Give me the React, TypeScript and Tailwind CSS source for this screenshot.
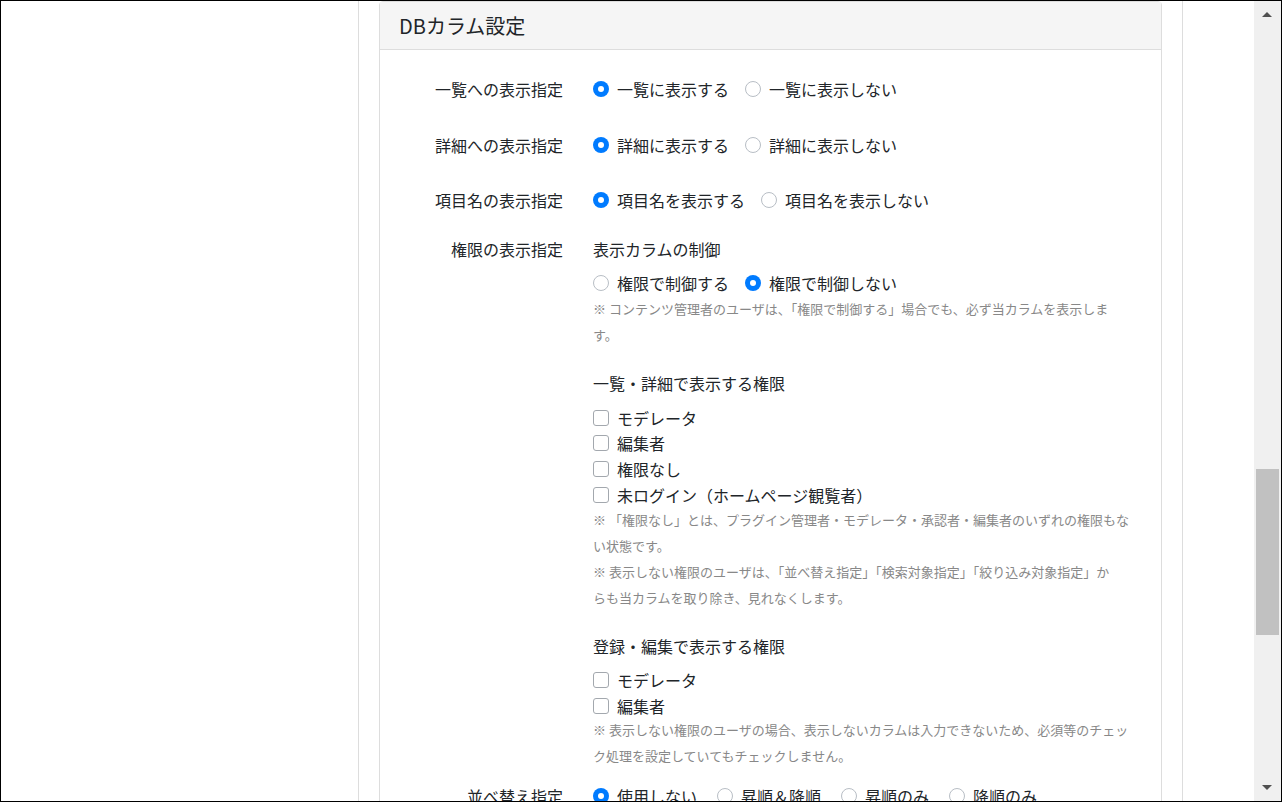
import type { ReactNode } from 'react';

const font = "font-['Noto_Sans_CJK_JP','Noto_Sans',sans-serif]";

function Radio({ label, checked = false, wide = false }: { label: string; checked?: boolean; wide?: boolean }) {
  return (
    <label className={`flex items-center ${wide ? 'mr-5' : 'mr-4'}`}>
      {checked ? (
        <span className="w-4 h-4 rounded-full bg-[#007bff] flex items-center justify-center shrink-0">
          <span className="w-1.5 h-1.5 rounded-full bg-white" />
        </span>
      ) : (
        <span className="w-4 h-4 rounded-full border border-[#b8bec5] bg-white shrink-0" />
      )}
      <span className="ml-2">{label}</span>
    </label>
  );
}

function Check({ label }: { label: string }) {
  return (
    <label className="flex items-center h-[25.67px]">
      <span className="w-4 h-4 rounded-[3px] border border-[#a3a8ae] bg-white shrink-0 translate-y-px" />
      <span className="ml-2 translate-y-px">{label}</span>
    </label>
  );
}

function Note({ children, className = '' }: { children: ReactNode; className?: string }) {
  return <p className={`text-[13px] leading-[26px] text-[#888888] whitespace-nowrap ${className}`}>{children}</p>;
}

function Row({ label, children, className = '' }: { label: string; children: ReactNode; className?: string }) {
  return (
    <div className={`flex ${className}`}>
      <div className="w-[183px] shrink-0 text-right leading-6">{label}</div>
      <div className="ml-[30px] flex-1 min-w-0">{children}</div>
    </div>
  );
}

function Scrollbar() {
  return (
    <div className="relative w-[27px] shrink-0 bg-[#f0f0f0]">
      <div className="absolute top-[11px] left-[8px] w-0 h-0 border-x-[5px] border-x-transparent border-b-[5px] border-b-[#505050]" />
      <div className="absolute top-[468px] left-[2px] w-[23px] h-[166px] bg-[#c1c1c1]" />
      <div className="absolute bottom-[11px] left-[8px] w-0 h-0 border-x-[5px] border-x-transparent border-t-[5px] border-t-[#505050]" />
    </div>
  );
}

export default function App() {
  return (
    <div className={`w-[1282px] h-[802px] border border-black bg-white overflow-hidden flex text-[16px] text-[#212529] ${font}`}>
      <div className="w-[1253px] shrink-0">
        <div className="ml-[357px] w-[825px] h-[800px] border-x border-[#dddddd] px-5">
          <div className="border border-[#dddddd] rounded-t-[4px]">
            <div className="h-[48px] bg-[#f5f5f5] border-b border-[#dddddd] flex items-center pl-[19px]">
              <h2 className="text-[20px] leading-6">DBカラム設定</h2>
            </div>
            <div className="pt-[27px] pr-[15px] pb-8">
              <Row label="一覧への表示指定">
                <div className="flex h-6 items-center">
                  <Radio label="一覧に表示する" checked />
                  <Radio label="一覧に表示しない" />
                </div>
              </Row>
              <Row label="詳細への表示指定" className="mt-8">
                <div className="flex h-6 items-center">
                  <Radio label="詳細に表示する" checked />
                  <Radio label="詳細に表示しない" />
                </div>
              </Row>
              <Row label="項目名の表示指定" className="mt-[31px]">
                <div className="flex h-6 items-center">
                  <Radio label="項目名を表示する" checked />
                  <Radio label="項目名を表示しない" />
                </div>
              </Row>
              <Row label="権限の表示指定" className="mt-[25px]">
                <p className="leading-6">表示カラムの制御</p>
                <div className="flex h-6 items-center mt-[10px]">
                  <Radio label="権限で制御する" />
                  <Radio label="権限で制御しない" checked />
                </div>
                <Note className="mt-px">
                  ※ コンテンツ管理者のユーザは、「権限で制御する」場合でも、必ず当カラムを表示しま
                  <br />す。
                </Note>

                <p className="leading-6 mt-[23px]">一覧・詳細で表示する権限</p>
                <div className="mt-[9px]">
                  <Check label="モデレータ" />
                  <Check label="編集者" />
                  <Check label="権限なし" />
                  <Check label="未ログイン（ホームページ観覧者）" />
                </div>
                <Note>
                  ※ 「権限なし」とは、プラグイン管理者・モデレータ・承認者・編集者のいずれの権限もな
                  <br />い状態です。
                </Note>
                <Note>
                  ※ 表示しない権限のユーザは、「並べ替え指定」「検索対象指定」「絞り込み対象指定」か
                  <br />らも当カラムを取り除き、見れなくします。
                </Note>

                <p className="leading-6 mt-[23px]">登録・編集で表示する権限</p>
                <div className="mt-[9px]">
                  <Check label="モデレータ" />
                  <Check label="編集者" />
                </div>
                <Note className="-mt-px">
                  ※ 表示しない権限のユーザの場合、表示しないカラムは入力できないため、必須等のチェッ
                  <br />ク処理を設定していてもチェックしません。
                </Note>
              </Row>
              <Row label="並べ替え指定" className="mt-[15px]">
                <div className="flex h-6 items-center">
                  <Radio label="使用しない" checked wide />
                  <Radio label="昇順＆降順" wide />
                  <Radio label="昇順のみ" wide />
                  <Radio label="降順のみ" wide />
                </div>
              </Row>
            </div>
          </div>
        </div>
      </div>
      <Scrollbar />
    </div>
  );
}
